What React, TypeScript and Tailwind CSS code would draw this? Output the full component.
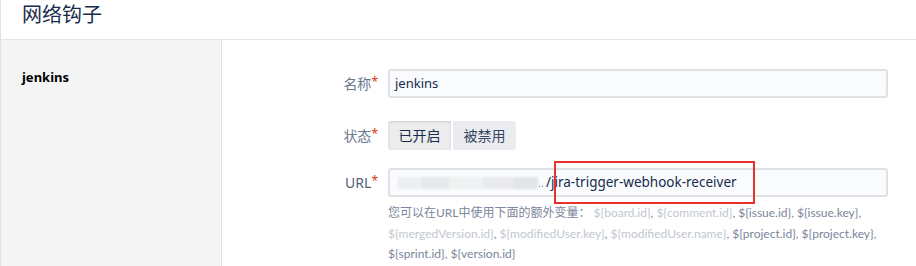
import React from "react";

const font = '"Segoe UI", "Noto Sans", "Noto Sans CJK SC", sans-serif';
const helpFont = '"Segoe UI", Lato, "Noto Sans CJK SC", sans-serif';

function Label({ text, strong }: { text: string; strong?: boolean }) {
  return (
    <div
      className={`w-[166px] shrink-0 pr-[10px] text-right text-[14px] ${strong ? "text-[#505f79]" : "text-[#6b778c]"}`}
    >
      {text}
      <span className="text-[#de350b] text-[12px] align-top">*</span>
    </div>
  );
}

const light = "text-[#c1c7d0]";
const dark = "text-[#7a869a]";

export default function App() {
  return (
    <div
      className="relative w-[916px] h-[266px] overflow-hidden bg-white border-l border-[#dfe1e6] text-[#172b4d]"
      style={{ fontFamily: font }}
    >
      <div className="h-[40px] border-b border-[#e2e4e9] pl-[21px] flex items-center">
        <span className="text-[20px] leading-none -mt-[9px] text-[#172b4d]">网络钩子</span>
      </div>
      <div className="flex h-[226px]">
        <div className="w-[221px] shrink-0 bg-[#f4f4f4] border-r border-[#dfe1e6] pl-[21px] pt-[28px]">
          <div className="text-[13px] font-bold text-black">jenkins</div>
        </div>
        <div className="flex-1 pt-[29px] pr-[28px]">
          <div className="flex items-center h-[29px]">
            <Label text="名称" />
            <div className="flex-1 h-[29px] rounded-[3px] border-2 border-[#dfe1e6] bg-[#fafbfc] flex items-center pl-[5px] text-[13px] text-[#172b4d]">
              jenkins
            </div>
          </div>
          <div className="flex items-center h-[29px] mt-[23px]">
            <Label text="状态" />
            <div className="flex gap-[2px] h-[29px]">
              <div className="w-[63px] rounded-l-[3px] bg-[#ececec] shadow-[inset_0_1px_3px_rgba(0,0,0,0.12)] flex items-center justify-center text-[14px] text-[#172b4d]">
                已开启
              </div>
              <div className="w-[63px] rounded-r-[3px] bg-[#ebecf0] flex items-center justify-center text-[14px] text-[#344563]">
                被禁用
              </div>
            </div>
          </div>
          <div className="flex items-center h-[29px] mt-[18px]">
            <Label text="URL" strong />
            <div className="flex-1 h-[29px] rounded-[3px] border-2 border-[#dfe1e6] bg-[#fafbfc] flex items-center pl-[8px] text-[13.5px] text-[#172b4d]">
              <span className="flex h-[14px] items-center">
                <span className="w-[22px] h-[12px] bg-[#eceef1] blur-[1px]" />
                <span className="w-[30px] h-[12px] bg-[#e6e8eb] blur-[1px]" />
                <span className="w-[32px] h-[12px] bg-[#eef0f2] blur-[1px]" />
                <span className="w-[30px] h-[12px] bg-[#e8eaed] blur-[1px]" />
                <span className="w-[26px] h-[12px] bg-[#e3e5e9] blur-[1px]" />
                <span className="w-[8px] h-[12px] text-[#8a93a3] text-[11px] leading-[12px] blur-[0.5px]">..</span>
              </span>
              <span className="text-[#172b4d]">/jira-trigger-webhook-receiver</span>
            </div>
          </div>
          <div
            className="ml-[166px] mt-[6px] text-[12px] leading-[20.5px] text-[#7a869a]"
            style={{ fontFamily: helpFont }}
          >
            您可以在URL中使用下面的额外变量：{" "}
            <span className={light}>{"${board.id}"}</span>,{" "}
            <span className={light}>{"${comment.id}"}</span>,{" "}
            <span className={dark}>{"${issue.id}"}</span>,{" "}
            <span className={dark}>{"${issue.key}"}</span>,{" "}
            <span className={light}>{"${mergedVersion.id}"}</span>,{" "}
            <span className={light}>{"${modifiedUser.key}"}</span>,{" "}
            <span className={light}>{"${modifiedUser.name}"}</span>,{" "}
            <span className={dark}>{"${project.id}"}</span>,{" "}
            <span className={dark}>{"${project.key}"}</span>,{" "}
            <span className={dark}>{"${sprint.id}"}</span>,{" "}
            <span className={dark}>{"${version.id}"}</span>
          </div>
        </div>
      </div>
      <div className="absolute left-[553px] top-[161px] w-[201px] h-[43px] border-2 border-[#e8302d]" />
    </div>
  );
}
